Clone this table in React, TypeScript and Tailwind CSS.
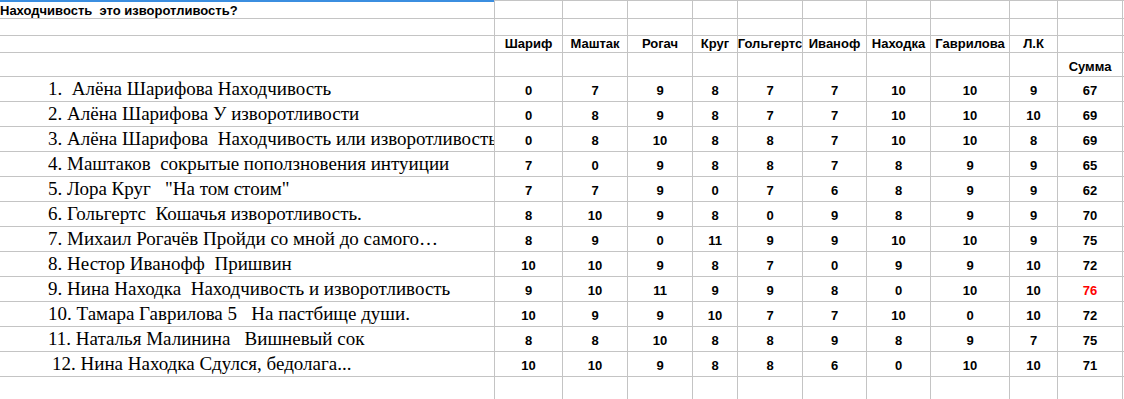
import React from "react";

const cols = ["Шариф", "Маштак", "Рогач", "Круг", "Гольгертс", "Иваноф", "Находка", "Гаврилова", "Л.К"];

const rows: { name: string; pad?: string; vals: number[]; sum: number; red?: boolean }[] = [
  { name: "1.  Алёна Шарифова Находчивость", vals: [0, 7, 9, 8, 7, 7, 10, 10, 9], sum: 67 },
  { name: "2. Алёна Шарифова У изворотливости", vals: [0, 8, 9, 8, 7, 7, 10, 10, 10], sum: 69 },
  { name: "3. Алёна Шарифова  Находчивость или изворотливость", vals: [0, 8, 10, 8, 8, 7, 10, 10, 8], sum: 69 },
  { name: "4. Маштаков  сокрытые поползновения интуиции", vals: [7, 0, 9, 8, 8, 7, 8, 9, 9], sum: 65 },
  { name: "5. Лора Круг   \"На том стоим\"", vals: [7, 7, 9, 0, 7, 6, 8, 9, 9], sum: 62 },
  { name: "6. Гольгертс  Кошачья изворотливость.", vals: [8, 10, 9, 8, 0, 9, 8, 9, 9], sum: 70 },
  { name: "7. Михаил Рогачёв Пройди со мной до самого…", vals: [8, 9, 0, 11, 9, 9, 10, 10, 9], sum: 75 },
  { name: "8. Нестор Иванофф  Пришвин", vals: [10, 10, 9, 8, 7, 0, 9, 9, 10], sum: 72 },
  { name: "9. Нина Находка  Находчивость и изворотливость", vals: [9, 10, 11, 9, 9, 8, 0, 10, 10], sum: 76, red: true },
  { name: "10. Тамара Гаврилова 5   На пастбище души.", vals: [10, 9, 9, 10, 7, 7, 10, 0, 10], sum: 72 },
  { name: "11. Наталья Малинина   Вишневый сок", vals: [8, 8, 10, 8, 8, 9, 8, 9, 7], sum: 75 },
  { name: "12. Нина Находка Сдулся, бедолага...", pad: "pl-[52px]", vals: [10, 10, 9, 8, 8, 6, 0, 10, 10], sum: 71 },
];

const arial = "font-['Liberation_Sans',Arial,sans-serif]";
const times = "font-['Liberation_Serif','Times_New_Roman',serif]";
const line = "border-[#c4c4c4]";

function Row({ h, first, children }: { h: string; first?: React.ReactNode; children?: (i: number) => React.ReactNode }) {
  return (
    <div className={`flex ${h}`}>
      <div className={`w-[494px] shrink-0 overflow-hidden border-t ${line}`}>{first}</div>
      {[68, 65, 65, 45, 65, 64, 64, 79, 48, 65].map((w, i) => (
        <div
          key={i}
          style={{ width: w }}
          className={`shrink-0 border-l border-t ${line} flex items-end justify-center overflow-hidden`}
        >
          {children ? children(i) : null}
        </div>
      ))}
      <div className={`flex-1 border-l border-t ${line}`} />
    </div>
  );
}

export default function App() {
  return (
    <div className="w-[1124px] h-[399px] bg-white overflow-hidden text-black">
      {/* title row */}
      <div className="flex h-[18px]">
        <div className={`w-[494px] shrink-0 border-t-2 border-[#3b8ee0] flex items-end pb-[1px] ${arial} text-[13px] font-bold whitespace-pre leading-none`}>
          Находчивость  это изворотливость?
        </div>
        {[68, 65, 65, 45, 65, 64, 64, 79, 48, 65].map((w, i) => (
          <div key={i} style={{ width: w }} className={`shrink-0 border-l border-t ${line}`} />
        ))}
        <div className={`flex-1 border-l border-t ${line}`} />
      </div>
      <Row h="h-[17px]" />
      <Row h="h-[17px]">
        {(i) =>
          i < 9 ? (
            <span className={`${arial} text-[13px] font-bold leading-none pb-[2px] whitespace-nowrap`}>{cols[i]}</span>
          ) : null
        }
      </Row>
      <Row h="h-[24px]">
        {(i) =>
          i === 9 ? (
            <span className={`${arial} text-[13px] font-bold leading-none pb-[3px]`}>Сумма</span>
          ) : null
        }
      </Row>
      {rows.map((r, ri) => (
        <Row
          key={ri}
          h="h-[25px]"
          first={
            <div className={`h-full flex items-end ${r.pad ?? "pl-[48px]"} pb-[3px] ${times} text-[19px] leading-none whitespace-pre`}>
              {r.name}
            </div>
          }
        >
          {(i) => (
            <span
              className={`${arial} text-[13px] font-bold leading-none pb-[4px] ${i === 9 && r.red ? "text-[#ff0000]" : ""}`}
            >
              {i < 9 ? r.vals[i] : r.sum}
            </span>
          )}
        </Row>
      ))}
      <Row h="h-[23px]" />
    </div>
  );
}
